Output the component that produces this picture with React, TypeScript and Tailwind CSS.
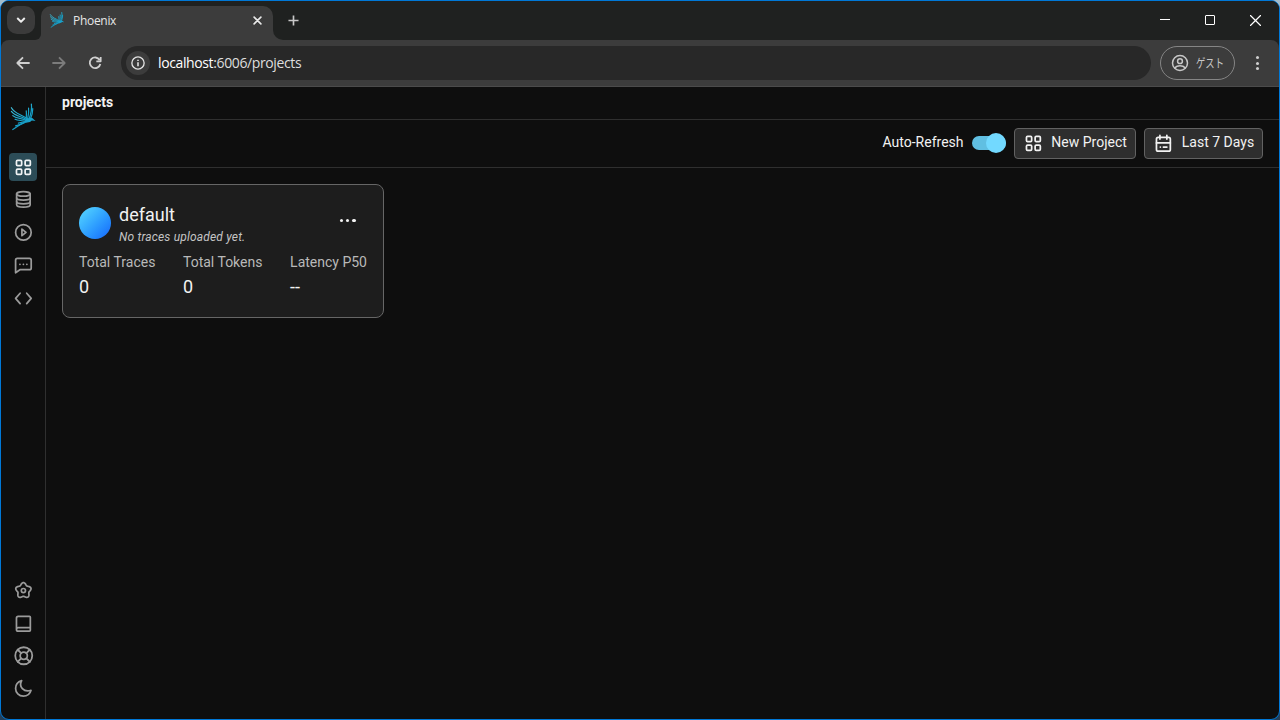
import type { ReactNode } from "react";
import clsx from "clsx";

interface IconProps {
  children: ReactNode;
  className?: string;
}

const Icon = ({ children, className = "size-[20.8px]" }: IconProps) => (
  <svg
    viewBox="0 0 24 24"
    fill="none"
    stroke="currentColor"
    strokeWidth={2}
    strokeLinecap="round"
    strokeLinejoin="round"
    className={clsx("shrink-0", className)}
  >
    {children}
  </svg>
);

const GridIcon = ({ className }: { className?: string }) => (
  <Icon className={className}>
    <rect x="4" y="4" width="6" height="6" rx="1.3" />
    <rect x="14" y="4" width="6" height="6" rx="1.3" />
    <rect x="4" y="14" width="6" height="6" rx="1.3" />
    <rect x="14" y="14" width="6" height="6" rx="1.3" />
  </Icon>
);

const DatabaseIcon = () => (
  <Icon>
    <ellipse cx="12" cy="5.7" rx="7.8" ry="2.6" />
    <path d="M4.200 5.700v12.600C4.200 19.800 7.600 21 12 21s7.800-1.200 7.800-2.700V5.700" />
    <path d="M4.200 10.500c0 1.400 3.600 2.300 7.800 2.300s7.800-.9 7.800-2.300M4.200 14.800c0 1.400 3.600 2.300 7.800 2.300s7.800-.9 7.800-2.300" />
  </Icon>
);

const PlayIcon = () => (
  <Icon>
    <circle cx="12" cy="12" r="9" />
    <path d="M10.300 8.200v7.600l4.700-3.800z" />
  </Icon>
);

const MessageIcon = () => (
  <Icon>
    <path d="M5 4h14a2 2 0 0 1 2 2v9a2 2 0 0 1-2 2H8l-5 3.500V6a2 2 0 0 1 2-2z" />
    <path d="M8 10.700h.01M12 10.700h.01M16 10.700h.01" />
  </Icon>
);

const CodeIcon = () => (
  <Icon>
    <path d="M8.200 6 3 12l5.200 6M15.800 6 21 12l-5.200 6" />
  </Icon>
);

// five-lobed outline, one lobe pointing up
const gearPoints = Array.from({ length: 90 }, (_, i) => {
  const angle = (i / 90) * Math.PI * 2;
  const radius = 7.900 + 1.250 * Math.cos(5 * angle);
  return `${(12 + radius * Math.sin(angle)).toFixed(2)},${(12.200 - radius * Math.cos(angle)).toFixed(2)}`;
}).join(" ");

const SettingsIcon = () => (
  <Icon>
    <polygon points={gearPoints} />
    <circle cx="12" cy="12.200" r="2.400" />
  </Icon>
);

const BookIcon = () => (
  <Icon>
    <path d="M6 4h13a1 1 0 0 1 1 1v15a1 1 0 0 1-1 1H6a2 2 0 0 1-2-2V6a2 2 0 0 1 2-2zM4 19a2 2 0 0 1 2-2h14" />
  </Icon>
);

const SupportIcon = () => (
  <Icon className="size-[21.5px]">
    <circle cx="12" cy="12" r="9.500" />
    <circle cx="12" cy="12" r="4" />
    <path d="m5.300 5.300 3.800 3.800M14.900 9.100l3.800-3.800M5.300 18.700l3.800-3.800M14.900 14.900l3.800 3.800" />
  </Icon>
);

const MoonIcon = () => (
  <Icon>
    <path d="M10 3c-1.800 3.300-1.500 6.900.8 9.300 2.500 2.600 6.200 3.300 10 1.900C19.700 18.200 16.300 21 12 21c-5.200 0-9-4-9-9 0-4.300 2.700-7.700 7-9z" />
  </Icon>
);

const CalendarIcon = () => (
  <Icon>
    <rect x="4" y="5" width="16" height="16" rx="2" />
    <path d="M8 2.800v4.200M16 2.800v4.200M4 11.500h16M8.500 16.200h.01M12 16.200h4" />
  </Icon>
);

const PhoenixLogo = ({ className, strokeWidth = 1.3 }: { className?: string; strokeWidth?: number }) => (
  <svg viewBox="0 0 28 30" fill="none" className={className}>
    <defs>
      <linearGradient id="feather" x1="0" y1="0" x2="28" y2="30" gradientUnits="userSpaceOnUse">
        <stop stopColor="#4cc3da" />
        <stop offset="0.5" stopColor="#18a3ca" />
        <stop offset="1" stopColor="#0d86b4" />
      </linearGradient>
    </defs>
    <g stroke="url(#feather)" strokeWidth={strokeWidth} strokeLinecap="round">
      <path d="M1.500 5C5 11.500 11 11.500 19 17" />
      <path d="M1.500 9C6 15 12 13.500 18 18" />
      <path d="M3 13.500C7 17.500 12 15.500 18 19" />
      <path d="M5.500 17.500C9 19.500 13 18 18 20" />
      <path d="M23 1C24 8 22.500 12 20.500 17" />
      <path d="M20 5.500C20.500 10 20 13 19 17" />
      <path d="M17.500 8.500C18 12 17.500 14 17.500 17" />
      <path d="M24.500 6C24.500 12 23.500 14 22 17" />
      <path d="M9 21.500C13 21 17 20 22 18" />
      <path d="M6 24.500C11 23.500 14 22 18 20" />
      <path d="M3 28.500C7 26.500 10 23 15 21" />
    </g>
    <path d="M17 17c3-.6 5-1.800 7-.8l3.500 3-4-.4c-1.500 2-4.500 2.500-7.500 1.700z" fill="#1aa0c8" />
  </svg>
);

const TabStrip = () => (
  <div className="flex h-[39px] shrink-0 items-start bg-[#1f2120] pl-[6px]">
    <div className="mt-[5px] flex size-7 items-center justify-center rounded-[10px] bg-[#3b3b3b] text-[#ededed]">
      <Icon className="size-3">
        <path d="m4.500 8 7.500 7.500L19.500 8" strokeWidth={3.8} strokeLinecap="butt" />
      </Icon>
    </div>
    <div className="flex h-full w-[6px] items-end overflow-hidden bg-[#3c3c3c]">
      <div className="h-full w-full rounded-br-[10px] bg-[#1f2120]" />
    </div>
    <div className="mt-[5px] flex h-[34px] w-[232px] items-center rounded-t-[10px] bg-[#3c3c3c] pr-[11px] pb-[6px] pl-[8px]">
      <PhoenixLogo className="h-4 w-4" strokeWidth={1.7} />
      <span className="ml-2 flex-1 pt-px text-[12px] tracking-[-0.3px] text-[#e6e6e6]">Phoenix</span>
      <Icon className="size-[9px] text-[#e8e8e8]">
        <path d="m3 3 18 18M21 3 3 21" strokeWidth={4.4} />
      </Icon>
    </div>
    <div className="h-full w-[10px] bg-[#3c3c3c]">
      <div className="h-full w-full rounded-bl-[10px] bg-[#1f2120]" />
    </div>
    <div className="mt-[13.500px] ml-[5px]">
      <Icon className="size-[11px] text-[#c8c8c8]">
        <path d="M12 1v22M1 12h22" strokeWidth={3.6} strokeLinecap="butt" />
      </Icon>
    </div>
    <div className="mt-[14px] mr-[18px] ml-auto flex h-[11px] gap-[35px] text-white">
      <span className="mt-[4px] h-px w-[10px] bg-white" />
      <span className="size-[10px] rounded-[1px] border border-white" />
      <Icon className="-mt-[0.5px] size-[11px]">
        <path d="m1 1 22 22M23 1 1 23" strokeWidth={2.6} />
      </Icon>
    </div>
  </div>
);

const AddressBar = () => (
  <div className="bg-[#1f2120]">
    <div className="flex h-[47px] items-center rounded-t-[8px] border-b border-[#4b4b4b] bg-[#3c3c3c] pl-[14px]">
      <Icon className="size-4 text-[#d0d0d0]">
        <path d="M22 12H4M12 3.500 3.500 12l8.500 8.500" strokeWidth={2.700} strokeLinecap="butt" />
      </Icon>
      <Icon className="ml-5 size-4 text-[#7c7c7c]">
        <path d="M2 12h18M12 3.500l8.500 8.500-8.500 8.500" strokeWidth={2.700} strokeLinecap="butt" />
      </Icon>
      <Icon className="ml-5 size-4 text-[#d0d0d0]">
        <path d="M19 7.500A8 8 0 1 0 20 13.500M20.500 3v6.500H14" strokeWidth={2.700} strokeLinecap="butt" />
      </Icon>
      <div className="ml-[18px] flex h-[34px] w-[1030px] items-center rounded-full bg-[#282828] pl-[5px]">
        <span className="flex size-6 items-center justify-center rounded-full bg-[#3c3c3c] text-[#e3e3e3]">
          <Icon className="size-4">
            <circle cx="12" cy="12" r="9.200" />
            <path d="M12 11v6M12 7v2" strokeLinecap="butt" strokeWidth={2.400} />
          </Icon>
        </span>
        <span className="ml-2 pb-px text-[14px] tracking-[-0.38px] text-[#dedede]">
          <span className="text-white">localhost</span>:6006/projects
        </span>
      </div>
      <div className="ml-[9px] flex h-[34px] w-[75px] items-center rounded-full border border-[#858585] pl-[10px] text-[#c7c7c7]">
        <Icon className="size-[18px]">
          <circle cx="12" cy="12" r="10" />
          <circle cx="12" cy="9.500" r="3.200" />
          <path d="M5 18.500c3.500-3.600 10.500-3.600 14 0" />
        </Icon>
        <span className="ml-[7px] origin-left scale-x-[0.78] pt-px text-[12px] whitespace-nowrap">ゲスト</span>
      </div>
      <div className="ml-[20.500px] flex flex-col gap-[2.500px]">
        <span className="size-[3px] rounded-full bg-[#cfcfcf]" />
        <span className="size-[3px] rounded-full bg-[#cfcfcf]" />
        <span className="size-[3px] rounded-full bg-[#cfcfcf]" />
      </div>
    </div>
  </div>
);

const NavItem = ({ children, active = false }: { children: ReactNode; active?: boolean }) => (
  <div
    className={clsx(
      "flex size-7 items-center justify-center rounded-[4px] pl-[0.6px]",
      active ? "bg-[#2c4c57] text-[#f0f3f4]" : "text-[#9b9b9b]",
    )}
  >
    {children}
  </div>
);

const SideNav = () => (
  <nav className="flex w-[45px] shrink-0 flex-col border-r border-[#2f2f2f] pt-[15px] pb-[16.600px] pl-2">
    <PhoenixLogo className="mb-[21px] ml-[1px] h-[30px] w-[26px]" />
    <div className="flex flex-col gap-[4.8px]">
      <NavItem active>
        <GridIcon />
      </NavItem>
      <NavItem>
        <DatabaseIcon />
      </NavItem>
      <NavItem>
        <PlayIcon />
      </NavItem>
      <NavItem>
        <MessageIcon />
      </NavItem>
      <NavItem>
        <CodeIcon />
      </NavItem>
    </div>
    <div className="mt-auto flex flex-col gap-[4.6px]">
      <NavItem>
        <SettingsIcon />
      </NavItem>
      <NavItem>
        <BookIcon />
      </NavItem>
      <NavItem>
        <SupportIcon />
      </NavItem>
      <NavItem>
        <MoonIcon />
      </NavItem>
    </div>
  </nav>
);

const Stat = ({ label, value }: { label: string; value: string }) => (
  <div className="flex flex-col">
    <span className="text-[14px] leading-5 text-[#b9b9b9]">{label}</span>
    <span className="mt-[3px] text-[18px] leading-6 text-[#f2f2f2]">{value}</span>
  </div>
);

const ProjectCard = () => (
  <article className="flex h-[134px] w-[322px] flex-col rounded-[8px] border border-[#666] bg-[#1d1d1d] px-4 pt-[18px]">
    <div className="flex">
      <div className="mt-1 size-8 rounded-full bg-linear-to-br from-[#5bdbff] to-[#1c63fb]" />
      <div className="ml-2 flex-1">
        <h2 className="text-[18px] leading-6 text-[#f2f2f2]">default</h2>
        <p className="text-[12px] leading-5 tracking-[0.17px] text-[#c4c4c4] italic">No traces uploaded yet.</p>
      </div>
      <div className="mt-[15.500px] mr-[11.500px] flex gap-[2.500px]">
        <span className="size-[3.600px] rounded-full bg-[#f2f2f2]" />
        <span className="size-[3.600px] rounded-full bg-[#f2f2f2]" />
        <span className="size-[3.600px] rounded-full bg-[#f2f2f2]" />
      </div>
    </div>
    <div className="mt-[5px] flex justify-between">
      <Stat label="Total Traces" value="0" />
      <Stat label="Total Tokens" value="0" />
      <Stat label="Latency P50" value="--" />
    </div>
  </article>
);

const ProjectsPage = () => (
  <main className="flex flex-1 flex-col">
    <header className="h-[33px] border-b border-[#2f2f2f] pl-4 text-[14px] leading-[31px] font-bold text-[#f2f2f2]">
      projects
    </header>
    <div className="flex h-12 items-center justify-end gap-2 border-b border-[#2f2f2f] pr-4 text-[14px] text-[#f2f2f2]">
      <span className="pr-[0.500px] pb-[3px]">Auto-Refresh</span>
      <div className="mb-[1px] flex h-[14px] w-[34px] items-center justify-end rounded-full bg-[#60bfe2]">
        <span className="size-5 rounded-full bg-[#72d9ff]" />
      </div>
      <button className="flex h-[31px] w-[122px] items-center rounded-[4px] border border-[#626262] bg-[#2e2e2e] pl-2">
        <GridIcon />
        <span className="ml-[7.500px] pb-[2px] whitespace-nowrap">New Project</span>
      </button>
      <button className="flex h-[31px] w-[119px] items-center rounded-[4px] border border-[#626262] bg-[#2e2e2e] pl-2">
        <CalendarIcon />
        <span className="ml-2 pb-[2px] whitespace-nowrap">Last 7 Days</span>
      </button>
    </div>
    <div className="p-4">
      <ProjectCard />
    </div>
  </main>
);

export default function App() {
  return (
    <div className="h-[720px] w-[1280px] bg-linear-to-b from-[#a3bccb] from-5% to-[#24405a] to-10%">
      <div className="flex h-full w-full flex-col overflow-hidden rounded-[9px] border border-[#0078d7] bg-[#0e0e0e]">
        <div className="font-['Open_Sans','Noto_Sans_CJK_JP',sans-serif]">
          <TabStrip />
          <AddressBar />
        </div>
        <div className="flex min-h-0 flex-1 font-[Roboto,sans-serif]">
          <SideNav />
          <ProjectsPage />
        </div>
      </div>
    </div>
  );
}
